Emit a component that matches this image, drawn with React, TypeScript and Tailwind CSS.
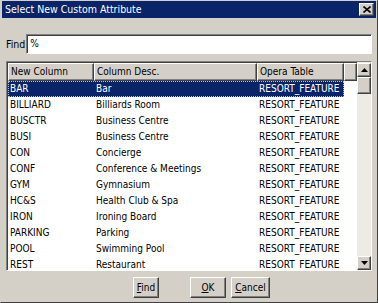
import React from "react";

const rows: [string, string][] = [
  ["BAR", "Bar"],
  ["BILLIARD", "Billiards Room"],
  ["BUSCTR", "Business Centre"],
  ["BUSI", "Business Centre"],
  ["CON", "Concierge"],
  ["CONF", "Conference & Meetings"],
  ["GYM", "Gymnasium"],
  ["HC&S", "Health Club & Spa"],
  ["IRON", "Ironing Board"],
  ["PARKING", "Parking"],
  ["POOL", "Swimming Pool"],
  ["REST", "Restaurant"],
];

// classic raised / sunken bevels
const raised =
  "border border-t-white border-l-white border-r-[#404040] border-b-[#404040] shadow-[inset_-1px_-1px_#808080]";
const sunken =
  "border border-t-[#808080] border-l-[#808080] border-r-white border-b-white shadow-[inset_1px_1px_#404040]";

function Button({ label, hot }: { label: string; hot: number }) {
  return (
    <button className={`${raised} w-full h-[21px] bg-[#d4d0c8] flex items-center justify-center px-0`}>
      <span>
        {label.slice(0, hot)}
        <span className="underline underline-offset-1">{label[hot]}</span>
        {label.slice(hot + 1)}
      </span>
    </button>
  );
}

export default function App() {
  return (
    <div className="w-[378px] h-[303px] bg-[#d4d0c8] border border-t-[#d4d0c8] border-l-[#d4d0c8] border-r-[#404040] border-b-[#404040] flex flex-col font-['DejaVu_Sans',sans-serif] [font-stretch:condensed] text-[10px] text-black leading-none overflow-hidden">
      {/* title bar */}
      <div className="h-[17px] mx-[1px] bg-[#0a246a] flex items-center justify-between pl-[3px] pr-[2px]">
        <span className="text-white text-[10.5px]">Select New Custom Attribute</span>
        <div className={`${raised} w-[15px] h-[13px] bg-[#d4d0c8] flex items-center justify-center`}>
          <svg width="8" height="7" viewBox="0 0 8 7">
            <path d="M0.5 0.5 L7.5 6.5 M7.5 0.5 L0.5 6.5" stroke="#000" strokeWidth="1.6" />
          </svg>
        </div>
      </div>

      {/* find row */}
      <div className="mt-[16px] flex items-center pl-[5px] pr-[5px] gap-[1px]">
        <span className="text-[10.5px]">Find</span>
        <div className={`${sunken} flex-1 h-[20px] bg-white flex items-center pl-[3px]`}>%</div>
      </div>

      {/* grid */}
      <div className={`${sunken} mt-[7px] mx-[5px] h-[210px] bg-white flex overflow-hidden`}>
        <div className="flex-1 flex flex-col overflow-hidden pt-[1px] pl-[1px]">
          <div className="h-[18px] flex shrink-0">
            <div className={`${raised} w-[86px] bg-[#d4d0c8] flex items-center pl-[2px]`}>New Column</div>
            <div className={`${raised} w-[163px] bg-[#d4d0c8] flex items-center pl-[2px]`}>Column Desc.</div>
            <div className={`${raised} w-[87px] bg-[#d4d0c8] flex items-center pl-[2px]`}>Opera Table</div>
            <div className={`${raised} flex-1 bg-[#d4d0c8]`} />
          </div>
          {rows.map(([code, desc], i) => (
            <div
              key={code}
              className={`h-[16px] shrink-0 w-[336px] flex items-center ${
                i === 0 ? "bg-[#0a246a] text-white outline-1 outline-dotted outline-offset-[-1px] outline-[#c0c0c0]" : ""
              }`}
            >
              <span className="w-[86px] pl-[2px]">{code}</span>
              <span className="w-[163px] pl-[2px]">{desc}</span>
              <span className="w-[87px] pl-[2px]">RESORT_FEATURE</span>
            </div>
          ))}
        </div>

        {/* scrollbar */}
        <div className="w-[14px] flex flex-col bg-[#ecebe6] pt-[1px]">
          <div className={`${raised} h-[14px] bg-[#d4d0c8] flex items-center justify-center`}>
            <svg width="7" height="4" viewBox="0 0 7 4">
              <path d="M3.5 0 L7 4 L0 4 Z" fill="#000" />
            </svg>
          </div>
          <div className={`${raised} h-[17px] bg-[#d4d0c8]`} />
          <div className="flex-1" />
          <div className={`${raised} h-[14px] bg-[#d4d0c8] flex items-center justify-center`}>
            <svg width="7" height="4" viewBox="0 0 7 4">
              <path d="M0 0 L7 0 L3.5 4 Z" fill="#000" />
            </svg>
          </div>
        </div>
      </div>

      {/* buttons */}
      <div className="mt-[6px] flex pl-[132px]">
        <div className="w-[26px]">
          <Button label="Find" hot={0} />
        </div>
        <div className="w-[36px] ml-[31px]">
          <Button label="OK" hot={0} />
        </div>
        <div className="w-[39px] ml-[5px]">
          <Button label="Cancel" hot={0} />
        </div>
      </div>
    </div>
  );
}
